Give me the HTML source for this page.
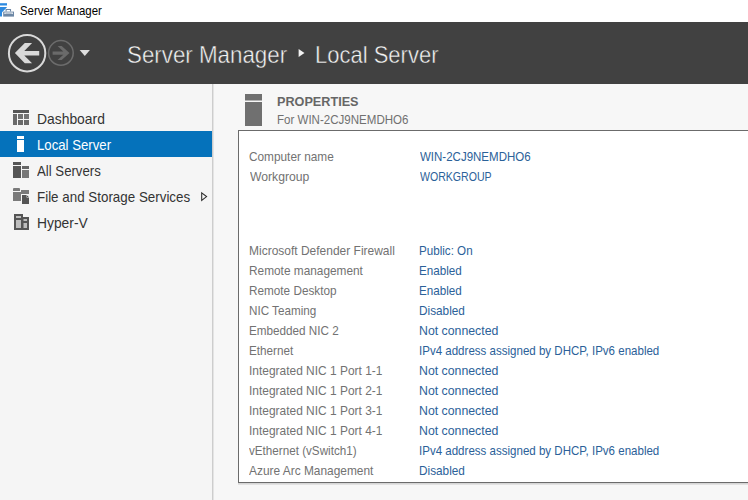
<!DOCTYPE html>
<html><head><meta charset="utf-8"><style>
html,body{margin:0;padding:0;width:748px;height:500px;overflow:hidden;background:#f7f7f7;font-family:"Liberation Sans", sans-serif;}
.abs{position:absolute;}
.t{position:absolute;white-space:nowrap;transform-origin:0 0;}
</style></head><body>
<div class="abs" style="left:0;top:0;width:748px;height:22px;background:#fff"></div>
<div class="abs" style="left:0;top:22px;width:748px;height:62px;background:#414141"></div>
<div class="abs" style="left:0;top:84px;width:212px;height:416px;background:#f5f5f5"></div>
<div class="abs" style="left:212px;top:84px;width:1px;height:416px;background:#cdcdcd"></div><div class="abs" style="left:213px;top:84px;width:1px;height:416px;background:#e4e4e4"></div>
<div class="abs" style="left:0;top:131px;width:212px;height:26px;background:#0572bb"></div>
<div class="abs" style="left:238px;top:130px;width:520px;height:351px;border:1px solid #6b6b6b;background:#fff"></div>
<div class="abs" style="left:238px;top:483px;width:520px;height:2px;background:#e2e2e2"></div><div class="abs" style="left:238px;top:483px;width:520px;height:1px;background:#d6d6d6"></div>

<svg class="abs" style="left:0;top:0" width="24" height="20" viewBox="0 0 24 20">
  <rect x="0" y="3.2" width="7" height="2.3" fill="#2d8ae0"/>
  <path d="M0 7 H6.8 V7.6 L2.8 11.6 L2 12.4 V16.6 H0 Z" fill="#2d8ae0"/>
  <path d="M6.1 11.6 V9.5 H10.5 V11.6" fill="none" stroke="#6d87a5" stroke-width="1.1"/>
  <rect x="3.2" y="11.6" width="10.8" height="5" fill="#6d87a5"/>
  <path d="M4.3 12.6 H12.9 V13.4 L12.2 14.2 L11.6 13.4 H5.6 L5 14.2 L4.3 13.4 Z" fill="#fff"/>
</svg>
<svg class="abs" style="left:0;top:22px" width="100" height="62" viewBox="0 22 100 62">
  <circle cx="27.1" cy="53.2" r="18.2" fill="none" stroke="#d9d9d9" stroke-width="2"/>
  <path d="M14.9 53.1 L24.8 42.9 L32.1 42.9 L24.3 51 L39.2 51 L39.2 55.5 L24.3 55.5 L32.1 63.3 L24.8 63.3 Z" fill="#d9d9d9"/>
  <circle cx="60.9" cy="52.9" r="12.3" fill="none" stroke="#6c6c6c" stroke-width="1.5"/>
  <path d="M69.5 53 L61.7 46.1 L57.6 46.1 L63.3 51.4 L52.6 51.4 L52.6 54.7 L63.3 54.7 L57.6 60 L61.7 60 Z" fill="#6a6a6a"/>
  <path d="M79.7 49.9 H89.9 L84.8 56.1 Z" fill="#dedede"/>
</svg>
<svg class="abs" style="left:298px;top:48px" width="8" height="10" viewBox="298 48 8 10">
  <path d="M298.6 49 L304.5 53 L298.6 57 Z" fill="#f2f2f2"/>
</svg>
<!-- sidebar icons -->
<svg class="abs" style="left:0;top:100px" width="40" height="140" viewBox="0 100 40 140">
  <rect x="13" y="110" width="16" height="3" fill="#565656"/>
  <g fill="#6a6a6a">
    <rect x="13" y="114" width="4" height="11"/>
    <rect x="18" y="114" width="5" height="5" fill="#727272"/><rect x="24" y="114" width="5" height="5" fill="#747474"/>
    <rect x="18" y="120" width="5" height="5"/><rect x="24" y="120" width="5" height="5"/>
  </g>
  <g fill="#fff">
    <rect x="17" y="136" width="7" height="3"/>
    <rect x="17" y="140" width="7" height="12"/>
  </g>
  <rect x="13" y="162" width="8" height="3" fill="#555"/>
  <rect x="13" y="166" width="8" height="12" fill="#555"/>
  <rect x="22" y="166" width="7" height="3" fill="#666"/>
  <rect x="22" y="170" width="7" height="8" fill="#777"/>
  <path d="M13 189 Q13 188 14 188 H19 Q20 188 20 189 V191 H13 Z" fill="#7a7a7a"/>
  <rect x="13" y="192" width="8" height="9" fill="#7a7a7a"/>
  <rect x="21" y="190" width="8" height="4" fill="#7a7a7a"/>
  <path d="M22 195 H26.6 V197.4 H29 V204 H22 Z" fill="#555"/><rect x="27" y="195.8" width="1.3" height="1.2" fill="#555"/>
  <path d="M14 214 H23 V217 H29 V230 H14 Z" fill="#555"/>
  <g fill="#bdbdbd">
    <rect x="16" y="216" width="5" height="2"/>
    <rect x="16" y="220" width="5" height="8"/>
    <rect x="23.5" y="219" width="3.5" height="2"/>
    <rect x="23.5" y="223" width="3.5" height="5"/>
  </g>
</svg>
<svg class="abs" style="left:200px;top:180px" width="12" height="30" viewBox="200 180 12 30">
  <path d="M201.7 192.8 L206.6 196.6 L201.7 200.4 Z" fill="none" stroke="#2a2a2a" stroke-width="1.05"/>
</svg>
<svg class="abs" style="left:240px;top:90px" width="30" height="40" viewBox="240 90 30 40">
  <rect x="245" y="94" width="17" height="6.5" fill="#707070"/>
  <rect x="245" y="102" width="17" height="24" fill="#707070"/>
</svg>

<div class="t" style="left:19.68px;top:5.00px;font-size:12.4px;line-height:12.4px;font-weight:400;color:#000;transform:scaleX(0.9216)">Server Manager</div>
<div class="t" style="left:127.17px;top:43.00px;font-size:24px;line-height:24px;font-weight:400;color:#f4f4f4;-webkit-text-stroke:0.45px #414141;transform:scaleX(0.9304)">Server Manager</div>
<div class="t" style="left:314.87px;top:43.00px;font-size:24px;line-height:24px;font-weight:400;color:#f4f4f4;-webkit-text-stroke:0.45px #414141;transform:scaleX(0.9165)">Local Server</div>
<div class="t" style="left:37.03px;top:112.00px;font-size:14.3px;line-height:14.3px;font-weight:400;color:#333;transform:scaleX(0.9706)">Dashboard</div>
<div class="t" style="left:36.88px;top:138.00px;font-size:14.3px;line-height:14.3px;font-weight:400;color:#fff;transform:scaleX(0.9228)">Local Server</div>
<div class="t" style="left:37.30px;top:164.00px;font-size:14.3px;line-height:14.3px;font-weight:400;color:#333;transform:scaleX(0.9232)">All Servers</div>
<div class="t" style="left:36.76px;top:190.00px;font-size:14.3px;line-height:14.3px;font-weight:400;color:#333;transform:scaleX(0.9358)">File and Storage Services</div>
<div class="t" style="left:36.93px;top:216.00px;font-size:14.3px;line-height:14.3px;font-weight:400;color:#333;transform:scaleX(0.9673)">Hyper-V</div>
<div class="t" style="left:277.03px;top:95.40px;font-size:13px;line-height:13px;font-weight:700;color:#666;transform:scaleX(0.9732)">PROPERTIES</div>
<div class="t" style="left:277.07px;top:113.50px;font-size:12.4px;line-height:12.4px;font-weight:400;color:#707070;transform:scaleX(0.9314)">For WIN-2CJ9NEMDHO6</div>
<div class="t" style="left:249.20px;top:151.00px;font-size:12.4px;line-height:12.4px;font-weight:400;color:#727272;transform:scaleX(0.9539)">Computer name</div>
<div class="t" style="left:419.70px;top:151.00px;font-size:12.4px;line-height:12.4px;font-weight:400;color:#2b6199;transform:scaleX(0.9286)">WIN-2CJ9NEMDHO6</div>
<div class="t" style="left:249.90px;top:171.00px;font-size:12.4px;line-height:12.4px;font-weight:400;color:#727272;transform:scaleX(0.9833)">Workgroup</div>
<div class="t" style="left:419.70px;top:171.00px;font-size:12.4px;line-height:12.4px;font-weight:400;color:#2b6199;transform:scaleX(0.8524)">WORKGROUP</div>
<div class="t" style="left:248.93px;top:245.00px;font-size:12.4px;line-height:12.4px;font-weight:400;color:#727272;transform:scaleX(0.9671)">Microsoft Defender Firewall</div>
<div class="t" style="left:418.76px;top:245.00px;font-size:12.4px;line-height:12.4px;font-weight:400;color:#2b6199;transform:scaleX(0.9375)">Public: On</div>
<div class="t" style="left:248.94px;top:265.00px;font-size:12.4px;line-height:12.4px;font-weight:400;color:#727272;transform:scaleX(0.9559)">Remote management</div>
<div class="t" style="left:418.76px;top:265.00px;font-size:12.4px;line-height:12.4px;font-weight:400;color:#2b6199;transform:scaleX(0.9409)">Enabled</div>
<div class="t" style="left:248.95px;top:285.00px;font-size:12.4px;line-height:12.4px;font-weight:400;color:#727272;transform:scaleX(0.9484)">Remote Desktop</div>
<div class="t" style="left:418.76px;top:285.00px;font-size:12.4px;line-height:12.4px;font-weight:400;color:#2b6199;transform:scaleX(0.9409)">Enabled</div>
<div class="t" style="left:248.96px;top:305.00px;font-size:12.4px;line-height:12.4px;font-weight:400;color:#727272;transform:scaleX(0.9414)">NIC Teaming</div>
<div class="t" style="left:418.75px;top:305.00px;font-size:12.4px;line-height:12.4px;font-weight:400;color:#2b6199;transform:scaleX(0.9511)">Disabled</div>
<div class="t" style="left:248.96px;top:325.00px;font-size:12.4px;line-height:12.4px;font-weight:400;color:#727272;transform:scaleX(0.9447)">Embedded NIC 2</div>
<div class="t" style="left:418.71px;top:325.00px;font-size:12.4px;line-height:12.4px;font-weight:400;color:#2b6199;transform:scaleX(0.9936)">Not connected</div>
<div class="t" style="left:248.95px;top:345.00px;font-size:12.4px;line-height:12.4px;font-weight:400;color:#727272;transform:scaleX(0.9457)">Ethernet</div>
<div class="t" style="left:418.77px;top:345.00px;font-size:12.4px;line-height:12.4px;font-weight:400;color:#2b6199;transform:scaleX(0.9311)">IPv4 address assigned by DHCP, IPv6 enabled</div>
<div class="t" style="left:248.94px;top:365.00px;font-size:12.4px;line-height:12.4px;font-weight:400;color:#727272;transform:scaleX(0.9642)">Integrated NIC 1 Port 1-1</div>
<div class="t" style="left:418.71px;top:365.00px;font-size:12.4px;line-height:12.4px;font-weight:400;color:#2b6199;transform:scaleX(0.9936)">Not connected</div>
<div class="t" style="left:248.94px;top:385.00px;font-size:12.4px;line-height:12.4px;font-weight:400;color:#727272;transform:scaleX(0.9642)">Integrated NIC 1 Port 2-1</div>
<div class="t" style="left:418.71px;top:385.00px;font-size:12.4px;line-height:12.4px;font-weight:400;color:#2b6199;transform:scaleX(0.9936)">Not connected</div>
<div class="t" style="left:248.94px;top:405.00px;font-size:12.4px;line-height:12.4px;font-weight:400;color:#727272;transform:scaleX(0.9642)">Integrated NIC 1 Port 3-1</div>
<div class="t" style="left:418.71px;top:405.00px;font-size:12.4px;line-height:12.4px;font-weight:400;color:#2b6199;transform:scaleX(0.9936)">Not connected</div>
<div class="t" style="left:248.94px;top:425.00px;font-size:12.4px;line-height:12.4px;font-weight:400;color:#727272;transform:scaleX(0.9642)">Integrated NIC 1 Port 4-1</div>
<div class="t" style="left:418.71px;top:425.00px;font-size:12.4px;line-height:12.4px;font-weight:400;color:#2b6199;transform:scaleX(0.9936)">Not connected</div>
<div class="t" style="left:249.20px;top:445.00px;font-size:12.4px;line-height:12.4px;font-weight:400;color:#727272;transform:scaleX(0.9412)">vEthernet (vSwitch1)</div>
<div class="t" style="left:418.77px;top:445.00px;font-size:12.4px;line-height:12.4px;font-weight:400;color:#2b6199;transform:scaleX(0.9311)">IPv4 address assigned by DHCP, IPv6 enabled</div>
<div class="t" style="left:249.20px;top:465.00px;font-size:12.4px;line-height:12.4px;font-weight:400;color:#727272;transform:scaleX(0.9608)">Azure Arc Management</div>
<div class="t" style="left:418.75px;top:465.00px;font-size:12.4px;line-height:12.4px;font-weight:400;color:#2b6199;transform:scaleX(0.9511)">Disabled</div>

</body></html>
